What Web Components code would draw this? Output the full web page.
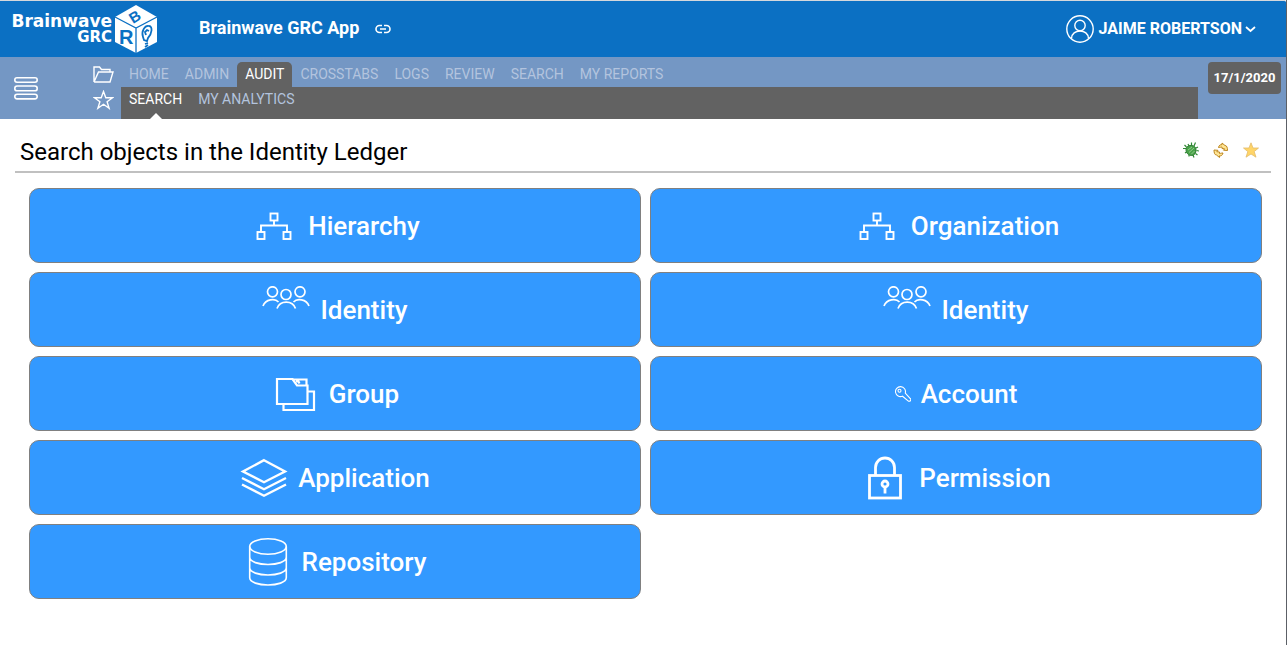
<!DOCTYPE html>
<html lang="en">
<head>
<meta charset="utf-8">
<title>Brainwave GRC App</title>
<style>
html, body { margin: 0; background: #fff; }
body { font-family: Roboto, "Liberation Sans", sans-serif; }
</style>
</head>
<body>
<grc-app></grc-app>

<script>
const ICONS = {
  tree: `<g fill="none" stroke="#fff" stroke-width="1.900"><rect x="20.500" y="11.500" width="7" height="7"/><rect x="7.500" y="30" width="7" height="7"/><rect x="33.500" y="30" width="7" height="7"/><path d="M24 18.500v5M11 30v-6.500h26v6.500"/></g>`,
  people: `<g fill="none" stroke="#fff" stroke-width="1.700"><circle cx="10.500" cy="5.800" r="5"/><circle cx="38" cy="5.800" r="5"/><circle cx="24" cy="8.500" r="5"/><path d="M1 20c2.500-7 12-8 15.500-4M31.500 16c3.500-4 13-3 15.500 4M15 22.500c3-8.500 15.500-8.500 18.500 0"/></g>`,
  folders: `<g fill="none" stroke="#fff" stroke-width="2.200"><path d="M6 9h15.500l4.500 6.500h10.500v18.500H6z"/><path d="M21.500 9.500h14v6M25 11.500h2.500l1 2"/><path d="M36.500 21.500h6.500v18.500H12.500v-6"/></g>`,
  key: `<g fill="none" stroke="#fff" stroke-width="1.100"><path d="M7.500 10.200a5 5 0 1 1 2.800-3.200l5 5.500a1.500 1.500 0 0 1-2.200 2.300z"/><circle cx="4.500" cy="4.700" r="1.500"/></g>`,
  layers: `<g fill="none" stroke="#fff" stroke-width="2.400"><path d="M24 6.200L45 17.500 24 28.200 3 17.500z"/><path d="M2 24l22 11.200L46 24M2 30.500L24 41.700l22-11.200"/></g>`,
  lock: `<g fill="none" stroke="#fff" stroke-width="2.800"><rect x="8.500" y="21.500" width="31" height="22.500"/><path d="M14.500 21v-7.500a9.500 9.500 0 0 1 19 0V21"/><circle cx="24" cy="30" r="3"/><path d="M24 33v6.500"/></g>`,
  database: `<g fill="none" stroke="#fff" stroke-width="1.600"><ellipse cx="24" cy="8.500" rx="18.300" ry="7.700"/><path d="M5.700 8.500v31c0 10 36.600 10 36.600 0v-31M5.700 19c0 10 36.600 10 36.600 0M5.700 29.500c0 10 36.600 10 36.600 0"/></g>`
};

function define(name, template, setup) {
  const t = document.createElement('template');
  t.innerHTML = template;
  customElements.define(name, class extends HTMLElement {
    connectedCallback() {
      if (this.shadowRoot) return;
      this.attachShadow({ mode: 'open' }).append(t.content.cloneNode(true));
      if (setup) setup(this, this.shadowRoot);
    }
  });
}

define('grc-logo', `
<style>
:host { display: flex; align-items: flex-start; color: #fff; font: bold 17px/16px "DejaVu Sans", sans-serif; }
.words { display: flex; flex-direction: column; align-items: flex-end; width: 100px; padding: 9px 2px 0 0; }
.unit { font-size: 15px; line-height: 17px; }
svg { display: block; }
svg text { font: bold 20px "Liberation Sans", sans-serif; fill: #0b70c3; }
</style>
<div class="words"><span>Brainwave</span><span class="unit">GRC</span></div>
<svg width="44" height="50" viewBox="0 0 44 50" role="img" aria-label="Cube">
  <path fill="#fff" d="M22 1L43 13v25L22 49 1 38V13z"/>
  <path d="M1 13l21 11 21-11M22 24v25" fill="none" stroke="#0b70c3" stroke-width="1.300"/>
  <text x="5" y="40">R</text>
  <text transform="translate(19 20) rotate(-32)" style="font-size:15px">B</text>
  <path d="M29 33c-2-6 2-12 6-11 4 0 3 8-1 12l-1 3-3-1zM32 31l-1-3 2-2 2 1M31 40l3-1M31 43l3-2" fill="none" stroke="#0b70c3" stroke-width="1.800"/>
</svg>`);

define('grc-user', `
<style>
:host { display: block; }
button { display: flex; align-items: center; gap: 5px; padding: 0; border: 0; background: none; color: #fff; font: bold 16px/28px Roboto, sans-serif; }
.name { display: flex; align-items: center; gap: 3px; }
</style>
<button type="button">
  <svg width="28" height="28" viewBox="0 0 28 28" fill="none" stroke="#fff" stroke-width="1.400"><circle cx="14" cy="14" r="13.200"/><circle cx="14" cy="10.500" r="5.200"/><path d="M5.500 23.500c0-10 17-10 17 0"/></svg>
  <span class="name"><slot></slot><svg width="11" height="8" viewBox="0 0 11 8" fill="none" stroke="#fff" stroke-width="1.800"><path d="M1 2l4.500 4L10 2"/></svg></span>
</button>`);

define('grc-header', `
<style>
:host { display: flex; align-items: center; box-sizing: border-box; height: 57px; padding: 0 30px 0 12px; background: #0b70c3; border-top: 1px solid #d5d8dc; border-radius: 0 2px 0 0; color: #fff; }
grc-logo { align-self: flex-start; margin-top: 3px; }
h1 { margin: 0 16px 2px 41px; font-size: 18px; line-height: 24px; font-weight: bold; }
a { display: flex; }
grc-user { margin-left: auto; }
</style>
<grc-logo></grc-logo>
<h1>Brainwave GRC App</h1>
<a href="#" aria-label="Copy link"><svg width="16" height="10" viewBox="0 0 16 10" fill="none" stroke="#fff" stroke-width="1.600"><path d="M7 1.500H4.500a3.500 3.500 0 0 0 0 7H7M9 1.500h2.500a3.500 3.500 0 0 1 0 7H9M5 5h6"/></svg></a>
<grc-user>JAIME ROBERTSON</grc-user>`);

define('grc-tab', `
<style>
:host { display: block; }
a { position: relative; display: block; padding: 0 8px; color: #b3c4de; font-size: 14px; line-height: 25px; text-decoration: none; border-radius: 5px 5px 0 0; }
:host([selected]) a { color: #fff; }
:host([selected][level="main"]) a { background: #626262; }
:host([level="sub"]) a { height: 32px; }
:host([level="sub"][selected]) a::after { content: ""; position: absolute; left: 50%; bottom: 0; margin-left: -6px; border: 6px solid transparent; border-top: 0; border-bottom-color: #fff; }
</style>
<a href="#"><slot></slot></a>`);

define('grc-nav', `
<style>
:host { display: grid; grid-template-columns: 121px minmax(0, 1fr) 88px; background: #7497c4; height: 62px; }
.left { display: flex; align-items: center; justify-content: space-between; padding: 0 7px 0 14px; }
button { display: block; padding: 0; border: 0; background: none; }
svg { display: block; }
.marks { display: grid; gap: 7px; }
.rows { display: flex; flex-direction: column; }
.row { display: flex; }
.main { padding-top: 5px; }
.sub { background: #626262; }
.date { justify-self: end; align-self: start; margin: 5px 5px 0 0; width: 73px; height: 32px; border-radius: 4px; background: #626262; color: #fff; font: bold 13px/32px Roboto, sans-serif; text-align: center; }
</style>
<div class="left">
  <button type="button" aria-label="Menu"><svg width="24" height="23" viewBox="0 0 24 23" fill="none" stroke="#fff" stroke-width="1.600"><rect x=".8" y=".8" width="22.400" height="4.400" rx="2.200"/><rect x=".8" y="9" width="22.400" height="4.800" rx="2.400"/><rect x=".8" y="17.300" width="22.400" height="4.600" rx="2.300"/></svg></button>
  <div class="marks">
    <button type="button" aria-label="Browse"><svg width="21" height="17" viewBox="0 0 21 17" fill="none" stroke="#fff" stroke-width="1.400"><path d="M1 16V1h5.500l2 2.500H17V6M1 16h16L20 6H5.500L1 16"/></svg></button>
    <button type="button" aria-label="Favourites"><svg width="21" height="20" viewBox="0 0 21 20" fill="none" stroke="#fff" stroke-width="1.400"><path d="M10.500 1.500l2.300 6.200h6.700l-5.400 4 2 6.500-5.600-3.900-5.600 3.900 2-6.500-5.400-4h6.700z"/></svg></button>
  </div>
</div>
<div class="rows">
  <div class="row main">
    <grc-tab level="main">HOME</grc-tab><grc-tab level="main">ADMIN</grc-tab><grc-tab level="main" selected>AUDIT</grc-tab><grc-tab level="main">CROSSTABS</grc-tab><grc-tab level="main">LOGS</grc-tab><grc-tab level="main">REVIEW</grc-tab><grc-tab level="main">SEARCH</grc-tab><grc-tab level="main">MY REPORTS</grc-tab>
  </div>
  <div class="row sub"><grc-tab level="sub" selected>SEARCH</grc-tab><grc-tab level="sub">MY ANALYTICS</grc-tab></div>
</div>
<button type="button" class="date">17/1/2020</button>`);

define('grc-title', `
<style>
:host { display: flex; align-items: flex-start; justify-content: space-between; box-sizing: border-box; height: 54px; margin: 0 15px; padding: 0 12px 0 5px; border-bottom: 2px solid #c0c0c0; }
h2 { margin: 0; padding-top: 19px; font-size: 24px; line-height: 28px; font-weight: 400; color: #000; }
.tools { display: flex; gap: 14px; padding-top: 23px; }
button { padding: 0; border: 0; background: none; }
svg { display: block; }
</style>
<h2><slot></slot></h2>
<div class="tools">
  <button type="button" aria-label="Debug"><svg width="16" height="16" viewBox="0 0 16 16"><path d="M1.500 3l2 2M0 6.500h3M5 2l1 2M8.500.500V3M12.500.500L11 4M13 6l2-1M13.500 8.500L16 9M12.500 11.500l2 1.500M3.500 10L2 11M6 12.500v2M10 13l1 2.500" stroke="#2f8a34" stroke-width="1.200"/><path d="M3 7.500C3 5 5 3.500 8 3.500S13 5 13 8s-1.500 5.500-4.500 5.500S3 11 3 7.500z" fill="#4aa34a" stroke="#2c7a30"/><path d="M5 8l4-3M6 10.500L11 6M8.500 12l3-3" stroke="#96cf90" stroke-width=".9"/></svg></button>
  <button type="button" aria-label="Refresh"><svg width="16" height="16" viewBox="0 0 16 16" fill="#ffe594" stroke="#bd8620" stroke-width="1"><path d="M5.500 5.500C6 3 7.500 2.500 9 2.700V1l3 2.500c2 0 2.500 2.500 2.500 5l-4-.3 1.200-1.400L9 6.500V5C8 5 7.500 5.500 5.500 5.500z"/><path d="M10 11c-.5 2.500-2 3-3.500 2.800v1.700L3.500 13C1.500 13 1 10.500 1 8l4 .3-1.200 1.400L6.500 10v1.500c1 0 1.500-.5 3.500-.5z"/></svg></button>
  <button type="button" aria-label="Add to favourites"><svg width="16" height="16" viewBox="0 0 16 16"><path d="M8 .8l2 5.200h5.500l-4.300 3.600 1.800 5.600-5-3.200-5 3.200 1.800-5.600L.5 6H6z" fill="#ffd568" stroke="#e3bb6b" stroke-width=".8"/></svg></button>
</div>`);

define('grc-tile', `
<style>
:host { display: block; }
button { display: flex; align-items: center; justify-content: center; gap: 10px; box-sizing: border-box; width: 100%; height: 75px; padding: 0; border: 1px solid #808080; border-radius: 10px; background: #3399ff; color: #fff; font: 500 26px/30px Roboto, sans-serif; }
svg { display: block; flex: none; }
</style>
<button type="button"><svg aria-hidden="true"></svg><span><slot></slot></span></button>`,
(host, root) => {
  const size = host.getAttribute('icon') === 'key' ? 16 : 48;
  const svg = root.querySelector('svg');
  svg.setAttribute('width', size);
  svg.setAttribute('height', size);
  svg.setAttribute('viewBox', `0 0 ${size} ${size}`);
  svg.innerHTML = ICONS[host.getAttribute('icon')];
});

define('grc-app', `
<style>
:host { display: block; box-sizing: border-box; min-height: 100vh; border-right: 1px solid #5c6066; }
main { display: block; }
.tiles { display: grid; grid-template-columns: repeat(2, minmax(0, 1fr)); gap: 9px; padding: 15px 24px 24px 29px; }
</style>
<header><grc-header></grc-header></header>
<nav><grc-nav></grc-nav></nav>
<main>
  <grc-title>Search objects in the Identity Ledger</grc-title>
  <div class="tiles">
    <grc-tile icon="tree">Hierarchy</grc-tile>
    <grc-tile icon="tree">Organization</grc-tile>
    <grc-tile icon="people">Identity</grc-tile>
    <grc-tile icon="people">Identity</grc-tile>
    <grc-tile icon="folders">Group</grc-tile>
    <grc-tile icon="key">Account</grc-tile>
    <grc-tile icon="layers">Application</grc-tile>
    <grc-tile icon="lock">Permission</grc-tile>
    <grc-tile icon="database">Repository</grc-tile>
  </div>
</main>`);
</script>
</body>
</html>
